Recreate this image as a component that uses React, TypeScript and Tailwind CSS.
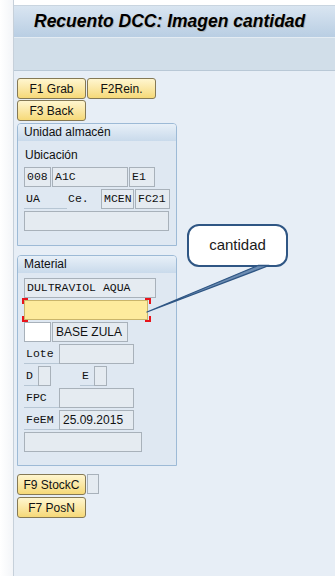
const mono = "font-['Liberation_Mono','Courier_New',monospace] text-[11.5px]";
const sans = "font-['Liberation_Sans',Arial,sans-serif] text-[12px]";
const field = "flex h-[20px] items-center overflow-hidden whitespace-nowrap border border-[#a8b1ba] bg-[#e5ebf1] pl-[2px] text-[#111]";
const label = "flex h-[20px] items-center border-b border-[#b7c6d4] pl-[2px] text-[#111]";
const btn =
  "flex h-[21px] w-[69px] items-center justify-center rounded-[3px] border border-[#857955] bg-linear-to-b from-[#fff6cf] to-[#f6d977] text-[#111] " +
  sans;

function Group({ title, children }: { title: string; children: React.ReactNode }) {
  return (
    <div className="w-[160px] rounded-t-[4px] border border-[#9dbad6] bg-[#dfe8f2]">
      <div className={"h-[17px] rounded-t-[3px] bg-linear-to-b from-[#e8f0f8] to-[#c9daeb] pl-[6px] leading-[17px] text-[#111] " + sans}>
        {title}
      </div>
      {children}
    </div>
  );
}

export default function App() {
  return (
    <div className="relative flex h-[576px] w-[335px] overflow-hidden bg-white">
      {/* left strip */}
      <div className="w-[14px] shrink-0 border-r border-[#c6d0da] bg-linear-to-r from-white to-[#f3f5f8]" />

      <div className="flex flex-1 flex-col bg-[#e7eef6]">
        <div className="h-[5px] bg-white" />
        <div className="flex h-[32px] items-center border-t border-[#c9d5e0] bg-linear-to-b from-[#d9e5f1] to-[#b9cee3] pl-[20px]">
          <span className="font-['Liberation_Sans',Arial,sans-serif] text-[17.5px] font-bold italic text-black [text-shadow:1px_1px_0_rgba(140,100,40,0.3)]">
            Recuento DCC: Imagen cantidad
          </span>
        </div>
        <div className="h-[34px] border-t border-b border-t-[#e4ecf3] border-b-[#b9c8d6] bg-[#d1dee9]" />

        {/* content */}
        <div className="flex flex-col pt-[7px] pl-[3px]">
          <div className="flex gap-[1px]">
            <div className={btn}>F1 Grab</div>
            <div className={btn}>F2Rein.</div>
          </div>
          <div className="mt-[1px] flex">
            <div className={btn}>F3 Back</div>
          </div>

          <div className="mt-[2px]">
            <Group title="Unidad almacén">
              <div className="flex flex-col gap-[2px] px-[6px] pt-[4px] pb-[14px]">
                <div className={"flex h-[20px] items-center pl-[1px] text-[#111] " + sans}>Ubicación</div>
                <div className={"flex gap-[1px] " + mono}>
                  <div className={field + " w-[27px]"}>008</div>
                  <div className={field + " w-[76px]"}>A1C</div>
                  <div className={field + " w-[26px]"}>E1</div>
                </div>
                <div className={"flex items-center " + mono}>
                  <div className={label + " w-[43px]"}>UA</div>
                  <div className="flex h-[20px] w-[34px] items-center pl-[1px] text-[#111]">Ce.</div>
                  <div className={field + " w-[33px]"}>MCEN</div>
                  <div className={field + " ml-[1px] w-[35px]"}>FC21</div>
                </div>
                <div className={field + " w-[145px]"} />
              </div>
            </Group>
          </div>

          <div className="mt-[9px]">
            <Group title="Material">
              <div className="flex flex-col gap-[2px] px-[6px] pt-[5px] pb-[13px]">
                <div className={field + " w-[132px] " + mono}>DULTRAVIOL AQUA</div>
                <div className="relative w-[124px]">
                  <div className="h-[20px] w-[124px] border border-[#c9b56a] bg-[#fdeb9d]" />
                  <span className="absolute -top-[2px] -left-[2px] h-[6px] w-[6px] border-t-2 border-l-2 border-[#e8141b]" />
                  <span className="absolute -top-[2px] -right-[3px] h-[6px] w-[6px] border-t-2 border-r-2 border-[#e8141b]" />
                  <span className="absolute -bottom-[2px] -left-[2px] h-[6px] w-[6px] border-b-2 border-l-2 border-[#e8141b]" />
                  <span className="absolute -right-[3px] -bottom-[2px] h-[6px] w-[6px] border-r-2 border-b-2 border-[#e8141b]" />
                </div>
                <div className="flex gap-[1px]">
                  <div className="h-[20px] w-[27px] border border-[#a8b1ba] bg-white" />
                  <div className={field + " w-[76px] pl-[3px] " + sans}>BASE ZULA</div>
                </div>
                <div className={"flex " + mono}>
                  <div className={label + " w-[35px]"}>Lote</div>
                  <div className={field + " w-[75px]"} />
                </div>
                <div className={"flex " + mono}>
                  <div className={label + " w-[14px]"}>D</div>
                  <div className={field + " w-[13px]"} />
                  <div className="w-[29px]" />
                  <div className={label + " w-[14px]"}>E</div>
                  <div className={field + " w-[13px]"} />
                </div>
                <div className={"flex " + mono}>
                  <div className={label + " w-[35px]"}>FPC</div>
                  <div className={field + " w-[75px]"} />
                </div>
                <div className="flex">
                  <div className={label + " w-[35px] " + mono}>FeEM</div>
                  <div className={field + " w-[75px] pl-[3px] " + sans}>25.09.2015</div>
                </div>
                <div className={field + " w-[118px]"} />
              </div>
            </Group>
          </div>

          <div className="mt-[8px] flex gap-[1px]">
            <div className={btn}>F9 StockC</div>
            <div className="h-[20px] w-[12px] border border-[#a8b1ba] bg-[#e5ebf1]" />
          </div>
          <div className="mt-[2px] flex">
            <div className={btn}>F7 PosN</div>
          </div>
        </div>
      </div>

      {/* callout */}
      <div className="absolute top-[224px] left-[187px] flex h-[43px] w-[101px] items-center justify-center rounded-[12px] border-2 border-[#2f5684] bg-white">
        <span className="font-['Liberation_Sans',Arial,sans-serif] text-[15px] text-[#1a1a1a]">cantidad</span>
      </div>
      <svg className="pointer-events-none absolute top-0 left-0" width="335" height="576">
        <polygon points="258,265.5 269,265.5 147,312" fill="#6d8db3" stroke="#2f5684" strokeWidth="1.3" strokeLinejoin="round" />
      </svg>
    </div>
  );
}
